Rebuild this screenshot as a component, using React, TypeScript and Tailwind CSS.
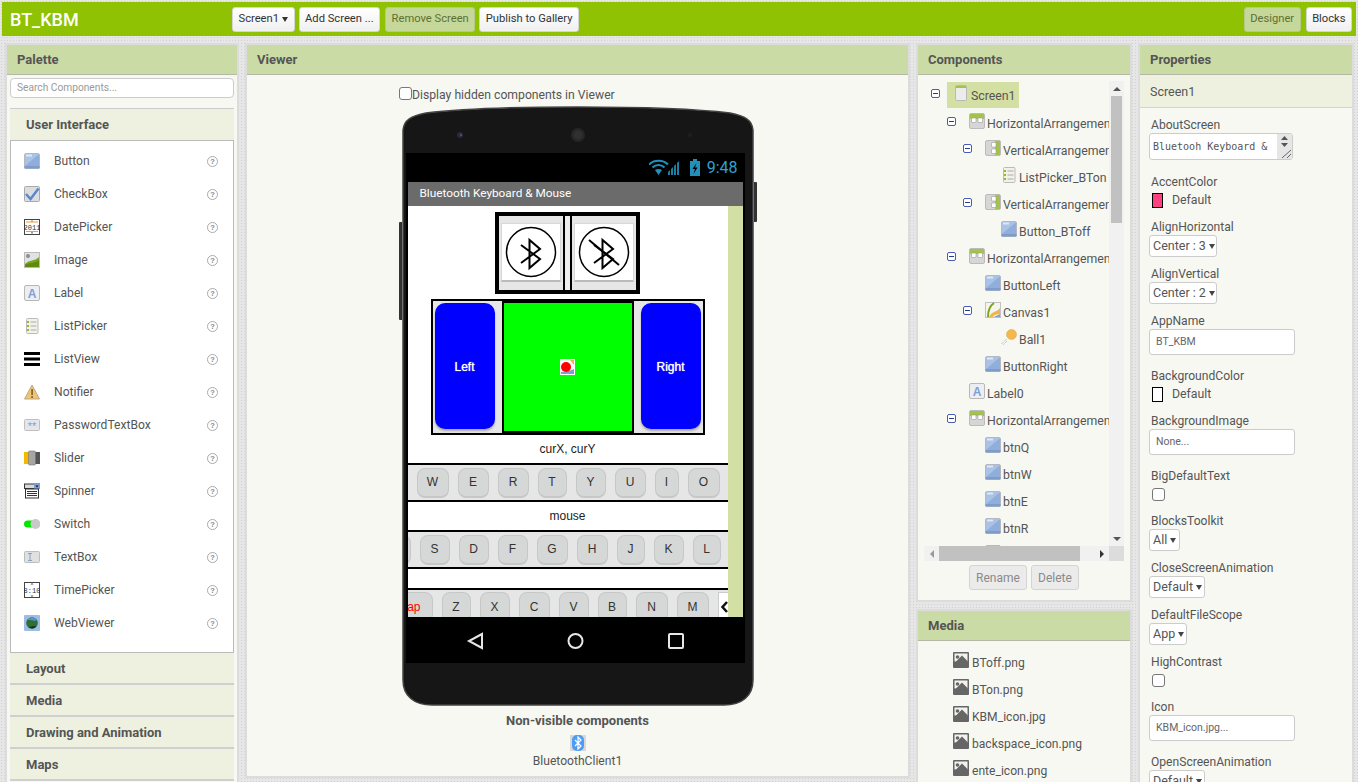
import type { ReactNode } from "react";

const RB = "font-['Roboto',sans-serif]";
const AR = "font-['Liberation_Sans',Arial,sans-serif]";

function BtnIcon() {
  return (
    <svg width="16" height="16" viewBox="0 0 16 16">
      <rect x="0.5" y="0.5" width="15" height="15" rx="1.5" fill="#a9c2e6" stroke="#b5b8bf" />
      <path d="M1 13 L14 2 L15 2 L15 13 Z" fill="#8faedb" />
      <rect x="2" y="1.5" width="6" height="2" fill="#dde7f6" />
      <rect x="0.5" y="13" width="15" height="2.5" fill="#7f9cc9" />
    </svg>
  );
}

function CheckIcon() {
  return (
    <svg width="16" height="16" viewBox="0 0 16 16">
      <rect x="0.5" y="0.5" width="15" height="15" rx="1" fill="#dcdde0" stroke="#aaa" />
      <path d="M2 8 L6.5 13 L14.5 2.5" fill="none" stroke="#5a86cc" strokeWidth="2.4" />
    </svg>
  );
}

function DateIcon() {
  return (
    <svg width="16" height="16" viewBox="0 0 16 16">
      <rect x="0.5" y="0.5" width="15" height="15" fill="#fff" stroke="#444" />
      <path d="M2 3 H14 M2 12.5 H14" stroke="#e9a13b" />
      <path d="M8 1.5 L8 2.5 M8 13 L8 14.5" stroke="#333" />
      <text x="8" y="11" textAnchor="middle" fontSize="7" fontFamily="Liberation Mono" fill="#333">2011</text>
    </svg>
  );
}

function ImageIcon() {
  return (
    <svg width="16" height="16" viewBox="0 0 16 16">
      <rect x="0.5" y="0.5" width="15" height="15" fill="#dfe3e6" stroke="#bbb" />
      <circle cx="4" cy="4" r="2" fill="#8a8f96" />
      <path d="M1 12 C6 7 10 10 15 5 V15 H1 Z" fill="#7da41d" />
      <path d="M1 13 C6 10 10 12 15 8 V15 H1 Z" fill="#5f8a10" />
    </svg>
  );
}

function LabelIcon() {
  return (
    <svg width="16" height="16" viewBox="0 0 16 16">
      <rect x="0.5" y="0.5" width="15" height="15" rx="1.5" fill="#eceef2" stroke="#b8b8b8" />
      <text x="8" y="12.5" textAnchor="middle" fontSize="12" fontWeight="700" fontFamily="Liberation Sans" fill="#7f9fd6">A</text>
    </svg>
  );
}

function ListPickerIcon() {
  return (
    <svg width="16" height="16" viewBox="0 0 16 16">
      <rect x="2.5" y="0.5" width="11.5" height="15" rx="1" fill="#f2f2ea" stroke="#bbb" />
      <path d="M6.5 4 H12.5 M6.5 8 H12.5 M6.5 12 H12.5" stroke="#aaa" />
      <path d="M4 3 V5 M4 7 V9 M4 11 V13" stroke="#94ba2c" strokeWidth="2" />
    </svg>
  );
}

function ListViewIcon() {
  return (
    <svg width="16" height="16" viewBox="0 0 16 16">
      <rect x="0" y="1" width="16" height="3" fill="#000" />
      <rect x="0" y="6.5" width="16" height="3" fill="#000" />
      <rect x="0" y="12" width="16" height="3" fill="#000" />
    </svg>
  );
}

function NotifierIcon() {
  return (
    <svg width="16" height="16" viewBox="0 0 16 16">
      <path d="M8 1 L15.5 15 H0.5 Z" fill="#f1c470" stroke="#b9a98b" />
      <rect x="7.2" y="5" width="1.8" height="6" fill="#8c6a33" />
      <rect x="7.2" y="12" width="1.8" height="2" fill="#8c6a33" />
    </svg>
  );
}

function PasswordIcon() {
  return (
    <svg width="16" height="16" viewBox="0 0 16 16">
      <rect x="0.5" y="2.5" width="15" height="11" rx="1" fill="#e4e6ea" stroke="#c0c0c0" />
      <text x="8" y="13" textAnchor="middle" fontSize="11" fontFamily="Liberation Sans" fill="#7f9fd6">**</text>
    </svg>
  );
}

function SliderIcon() {
  return (
    <svg width="16" height="16" viewBox="0 0 16 16">
      <rect x="0" y="2" width="6" height="12" fill="#f5b800" />
      <rect x="10" y="2" width="6" height="12" fill="#555" />
      <rect x="4.5" y="1" width="7" height="14" rx="1" fill="#a6a6a6" stroke="#777" strokeWidth="0.6" />
    </svg>
  );
}

function SpinnerIcon() {
  return (
    <svg width="16" height="16" viewBox="0 0 16 16">
      <rect x="0.5" y="1" width="15" height="4.5" fill="#d9d9d9" stroke="#333" />
      <rect x="10" y="1" width="6" height="5" fill="#7d9fd8" />
      <path d="M11.5 2.5 H14.5 L13 4.5 Z" fill="#111" />
      <rect x="1.5" y="6" width="13" height="9" fill="#fff" stroke="#333" />
      <path d="M3 8.5 H13 M3 10.5 H13 M3 12.5 H13" stroke="#333" />
    </svg>
  );
}

function SwitchIcon() {
  return (
    <svg width="16" height="16" viewBox="0 0 16 16">
      <rect x="0" y="4.5" width="12" height="7" rx="3.5" fill="#00e600" />
      <circle cx="11.5" cy="8" r="5" fill="#c9c9c9" />
    </svg>
  );
}

function TextBoxIcon() {
  return (
    <svg width="16" height="16" viewBox="0 0 16 16">
      <rect x="0.5" y="2.5" width="15" height="11" rx="1" fill="#dfe0e2" stroke="#bdbdbd" />
      <path d="M4 4.5 H8 M4 11.5 H8 M6 4.5 V11.5" stroke="#8c9fc2" />
    </svg>
  );
}

function TimeIcon() {
  return (
    <svg width="16" height="16" viewBox="0 0 16 16">
      <rect x="0.5" y="0.5" width="15" height="15" fill="#fff" stroke="#444" />
      <path d="M6.5 2.5 H9.5 L8 1 Z M6.5 13.5 H9.5 L8 15 Z" fill="#555" />
      <text x="8" y="10.8" textAnchor="middle" fontSize="7" fontFamily="Liberation Mono" fill="#333">8:10</text>
    </svg>
  );
}

function WebIcon() {
  return (
    <svg width="16" height="16" viewBox="0 0 16 16">
      <rect x="0" y="0" width="16" height="16" rx="1" fill="#9dbce6" />
      <circle cx="8" cy="8" r="5.8" fill="#2f6f35" />
      <path d="M3 5 C6 2 11 2 13 5 C10 7 6 4 3 5 Z" fill="#5d8fd0" />
      <path d="M4 12 C7 14 10 14 12.5 11.5 C9 10 7 12 4 12 Z" fill="#16361f" />
    </svg>
  );
}

function HArrIcon() {
  return (
    <svg width="16" height="16" viewBox="0 0 16 16">
      <rect x="0.5" y="0.5" width="15" height="15" rx="1.5" fill="#d6d6d6" stroke="#bbb" />
      <rect x="1" y="1" width="14" height="5" fill="#a5c34a" />
      <rect x="2.5" y="5" width="4.5" height="4.5" rx="0.5" fill="#fff" stroke="#999" strokeWidth="0.6" />
      <rect x="9" y="5" width="4.5" height="4.5" rx="0.5" fill="#fff" stroke="#999" strokeWidth="0.6" />
    </svg>
  );
}

function VArrIcon() {
  return (
    <svg width="16" height="16" viewBox="0 0 16 16">
      <rect x="0.5" y="0.5" width="15" height="15" rx="1.5" fill="#d6d6d6" stroke="#bbb" />
      <rect x="10" y="1" width="5" height="14" fill="#a5c34a" />
      <rect x="6.5" y="2.5" width="4.5" height="4.5" rx="0.5" fill="#fff" stroke="#999" strokeWidth="0.6" />
      <rect x="6.5" y="9" width="4.5" height="4.5" rx="0.5" fill="#fff" stroke="#999" strokeWidth="0.6" />
    </svg>
  );
}

function CanvasIcon() {
  return (
    <svg width="16" height="16" viewBox="0 0 16 16">
      <rect x="0.5" y="0.5" width="15" height="15" fill="#f5f5ef" stroke="#c2c2c2" />
      <path d="M3 15 C3 6 6 3 9 1" fill="none" stroke="#7da41d" strokeWidth="2" />
      <path d="M4 15 C8 8 11 11 15 6 V12 C12 13 9 12 8 15 Z" fill="#f0b54a" />
      <path d="M9 15 C11 13 13 14 15 12 V15 Z" fill="#7d9fd8" />
    </svg>
  );
}

function BallIcon() {
  return (
    <svg width="16" height="16" viewBox="0 0 16 16">
      <circle cx="10.5" cy="5.5" r="5" fill="#f3b94c" stroke="#d4a04a" strokeWidth="0.5" />
      <path d="M0.5 15 L6 9.5 M2.5 15.5 L6 12" stroke="#aaa" strokeDasharray="1 1" />
    </svg>
  );
}

function ScreenIcon() {
  return (
    <svg width="12" height="16" viewBox="0 0 12 16">
      <rect x="0.5" y="0.5" width="11" height="15" rx="1" fill="#ececec" stroke="#b9b9b9" />
      <rect x="1" y="1" width="10" height="2" fill="#a5c34a" />
    </svg>
  );
}

function MediaIcon() {
  return (
    <svg width="16" height="16" viewBox="0 0 16 16">
      <rect x="0" y="0" width="16" height="16" rx="1" fill="#666" />
      <rect x="1.5" y="1.5" width="13" height="8" fill="#f2f2ee" />
      <circle cx="4.5" cy="5" r="1.8" fill="#666" />
      <path d="M1.5 11 L9 3.5 L14.5 9 V14 H1.5 Z" fill="#666" />
    </svg>
  );
}

function HelpIcon() {
  return (
    <svg width="11" height="11" viewBox="0 0 11 11">
      <circle cx="5.5" cy="5.5" r="5" fill="#fff" stroke="#aaa" />
      <text x="5.5" y="8.2" textAnchor="middle" fontSize="7.5" fontWeight="700" fontFamily="Liberation Sans" fill="#888">?</text>
    </svg>
  );
}

function TopBtn({ children, active }: { children: ReactNode; active?: boolean }) {
  return (
    <div
      className={
        active
          ? "flex h-[25px] items-center rounded-[3px] border border-[#b5c98a] bg-[#c5d89a] px-[5.5px] text-[11.2px] text-[#5e7032]"
          : "flex h-[25px] items-center rounded-[3px] border border-[#d5d5d5] bg-gradient-to-b from-white to-[#f0f0f0] px-[5.5px] text-[11.2px] text-[#333]"
      }
    >
      {children}
    </div>
  );
}

const palette: [string, ReactNode][] = [
  ["Button", <BtnIcon />],
  ["CheckBox", <CheckIcon />],
  ["DatePicker", <DateIcon />],
  ["Image", <ImageIcon />],
  ["Label", <LabelIcon />],
  ["ListPicker", <ListPickerIcon />],
  ["ListView", <ListViewIcon />],
  ["Notifier", <NotifierIcon />],
  ["PasswordTextBox", <PasswordIcon />],
  ["Slider", <SliderIcon />],
  ["Spinner", <SpinnerIcon />],
  ["Switch", <SwitchIcon />],
  ["TextBox", <TextBoxIcon />],
  ["TimePicker", <TimeIcon />],
  ["WebViewer", <WebIcon />],
];

function PanelHead({ title }: { title: string }) {
  return (
    <div className="flex h-[30px] items-center border-b border-[#b4b8a6] bg-[#cbdba6] pl-[10px] text-[13px] font-bold text-[#555]">
      {title}
    </div>
  );
}

function Palette() {
  return (
    <div className="h-[760px] w-[234px] shrink-0 border-2 border-[#dcdcdc] bg-[#f7f8f2]">
      <PanelHead title="Palette" />
      <div className="px-[3px]">
        <div className="mt-[3px] flex h-[20px] items-center rounded-[4px] border border-[#ccc] bg-white pl-[6px] text-[10.2px] text-[#999]">
          Search Components...
        </div>
        <div className="mt-[10px] flex h-[32px] items-center border-t border-[#ccc] bg-[#eef1df] pl-[16px] text-[13px] font-bold text-[#555]">
          User Interface
        </div>
        <div className="h-[513px] border border-[#bbb] bg-white pt-[3px]">
          {palette.map(([name, icon]) => (
            <div key={name} className="flex h-[33px] items-center pl-[13px] text-[12.1px] text-[#555]">
              <span className="mt-[1px] flex h-[16px] w-[16px]">{icon}</span>
              <span className="ml-[14px] w-[153px] pt-[1px]">{name}</span>
              <span className="mt-[1px] flex">
                <HelpIcon />
              </span>
            </div>
          ))}
        </div>
        {["Layout", "Media", "Drawing and Animation", "Maps"].map((s) => (
          <div
            key={s}
            className="flex h-[32px] items-center border-b-2 border-[#cfcfcf] bg-[#eef1df] pl-[16px] pt-[1px] text-[13px] font-bold text-[#555]"
          >
            {s}
          </div>
        ))}
      </div>
    </div>
  );
}

function BtGlyph({ off }: { off?: boolean }) {
  return (
    <svg width="58" height="57" viewBox="0 0 58 57">
      <circle cx="29" cy="28" r="24.5" fill="#fff" stroke="#000" strokeWidth="1.5" />
      <path d="M19 21 L38 35 L27.5 44 V16 L38 25 L19 39" fill="none" stroke="#000" strokeWidth="2" />
      {off && <path d="M14 16 L44 41" stroke="#000" strokeWidth="2" />}
    </svg>
  );
}

function BtCell({ off }: { off?: boolean }) {
  return (
    <div className="h-[74px] w-[64px] bg-[#e6e6e6] pl-[2px] pt-[7px]">
      <div className="h-[59px] w-[60px] border border-b-2 border-[#d8d8d8] border-b-[#bbb] bg-white">
        <BtGlyph off={off} />
      </div>
    </div>
  );
}

function Key({ label, w }: { label: string; w: string }) {
  return (
    <div
      className={`flex h-[30px] shrink-0 items-center justify-center rounded-[8px] border border-b-2 border-[#c6c8c8] bg-[#d6d8d8] text-[12px] text-[#333] ${w}`}
    >
      {label}
    </div>
  );
}

const rowOne: [string, string][] = [
  ["W", "w-[32px]"],
  ["E", "w-[31px]"],
  ["R", "w-[31px]"],
  ["T", "w-[29px]"],
  ["Y", "w-[30px]"],
  ["U", "w-[31px]"],
  ["I", "w-[24px]"],
  ["O", "w-[32px]"],
];
const rowTwo: [string, string][] = [
  ["", "w-[30px]"],
  ["S", "w-[30px]"],
  ["D", "w-[30px]"],
  ["F", "w-[30px]"],
  ["G", "w-[31px]"],
  ["H", "w-[31px]"],
  ["J", "w-[28px]"],
  ["K", "w-[30px]"],
  ["L", "w-[28px]"],
];
const rowThree: [string, string][] = [
  ["Z", "w-[29px]"],
  ["X", "w-[30px]"],
  ["C", "w-[31px]"],
  ["V", "w-[30px]"],
  ["B", "w-[29px]"],
  ["N", "w-[32px]"],
  ["M", "w-[32px]"],
];

function PhoneContent() {
  return (
    <div className={`h-[411px] w-[320px] overflow-hidden bg-white ${AR}`}>
      <div className="mx-auto mt-[6px] flex h-[82px] w-[145px] border-4 border-black bg-black">
        <BtCell />
        <div className="mx-[2px] w-[5px] bg-[#eeeeee]" />
        <BtCell off />
      </div>
      <div className="mx-auto mt-[5px] flex h-[136px] w-[274px] border-2 border-black bg-[#e6e6e6]">
        <div className="w-[69px] pl-[2px] pt-[2px]">
          <div className="flex h-[126px] w-[60px] items-center justify-center rounded-[10px] bg-[#0000ff] pt-[2px] text-[12px] text-white shadow-[0_2px_2px_#aaa] [text-shadow:0_0_1px_#fff]">
            Left
          </div>
        </div>
        <div className="flex h-[132px] w-[132px] items-center justify-center border-2 border-black bg-[#00ff00]">
          <svg width="15" height="16" viewBox="0 0 15 16">
            <rect width="15" height="16" fill="#fff" />
            <path d="M10 1 H14 V6 Z" fill="#f0b54a" />
            <path d="M1 15 L14 15 L14 10 C10 12 6 12 1 13 Z" fill="#7d9fd8" />
            <circle cx="6" cy="8" r="5" fill="#f00" />
          </svg>
        </div>
        <div className="w-[69px] pl-[7px] pt-[2px]">
          <div className="flex h-[126px] w-[60px] items-center justify-center rounded-[10px] bg-[#0000ff] pt-[2px] text-[12px] text-white shadow-[0_2px_2px_#aaa] [text-shadow:0_0_1px_#fff]">
            Right
          </div>
        </div>
      </div>
      <div className="flex h-[28px] items-center justify-center text-[12px] text-[#222]">curX, curY</div>
      <div className="flex h-[39px] items-center gap-[9px] border-y-2 border-black bg-[#e6e6e6] pl-[9px]">
        {rowOne.map(([k, w]) => (
          <Key key={k} label={k} w={w} />
        ))}
      </div>
      <div className="flex h-[28px] items-center justify-center text-[12px] text-[#222]">mouse</div>
      <div className="flex h-[39px] items-center border-y-2 border-black bg-[#e6e6e6]">
        <div className="-ml-[27px] flex gap-[9px]">
          {rowTwo.map(([k, w]) => (
            <Key key={k || "a"} label={k} w={w} />
          ))}
        </div>
      </div>
      <div className="h-[19px]" />
      <div className="flex h-[40px] items-start gap-[9px] overflow-hidden border-t-2 border-black bg-[#e6e6e6] pt-[2px]">
        <div className="-ml-[22px] flex h-[30px] w-[47px] shrink-0 items-center justify-end rounded-[8px] border border-b-2 border-[#c6c8c8] bg-[#d6d8d8] pr-[11px] text-[12px] text-[#f00]">
          Cap
        </div>
        {rowThree.map(([k, w]) => (
          <Key key={k} label={k} w={w} />
        ))}
        <div className="flex h-[30px] w-[24px] shrink-0 items-center border border-[#ccc] bg-white pl-[2px]">
          <svg width="10" height="14" viewBox="0 0 10 14">
            <path d="M6 2 L1.5 7 L6 12" fill="none" stroke="#111" strokeWidth="2.5" />
          </svg>
        </div>
      </div>
    </div>
  );
}

function Phone() {
  return (
    <div className="relative mx-auto mt-[3px] h-[600px] w-[352px]">
      <svg className="absolute inset-0" width="352" height="600" viewBox="0 0 352 600">
        <path
          d="M1 24 C2 14 9 10 24 7 C90 -1 262 -1 328 7 C343 10 350 14 351 24 L351 574 C351 590 340 599 322 599 L30 599 C12 599 1 590 1 574 Z"
          fill="#161616"
          stroke="#444"
          strokeWidth="1.5"
        />
        <circle cx="58" cy="29" r="3" fill="#2a2a3a" />
        <circle cx="59" cy="29" r="1" fill="#55558a" />
        <circle cx="176" cy="29" r="7" fill="#262626" />
        <circle cx="176" cy="29" r="4.5" fill="#303030" />
        <circle cx="288" cy="29" r="2.5" fill="#1d1d1d" />
      </svg>
      <div className="absolute left-[-3px] top-[116px] h-[98px] w-[3px] rounded-l-[1px] bg-[#333]" />
      <div className="absolute right-[-3px] top-[76px] h-[40px] w-[3px] rounded-r-[1px] bg-[#333]" />
      <div className="relative pl-[4px] pt-[47px]">
        <div className="h-[510px] w-[339px] bg-black">
          <div className="flex h-[29px] items-center justify-end pr-[7px]">
            <svg width="33" height="17" viewBox="0 0 33 17">
              <path d="M0 5.5 C5 0.5 14 0.5 19 5.5" fill="none" stroke="#2390bb" strokeWidth="2" />
              <path d="M3.5 8.5 C7 5 12 5 15.5 8.5" fill="none" stroke="#2390bb" strokeWidth="2" />
              <path d="M6 11 C8 9.5 11 9.5 13 11 L9.5 16 Z" fill="#2390bb" />
              <path d="M19 16 V13 L21 11 V16 Z M22 16 V10 L24 8 V16 Z M25 16 V7 L27 5 V16 Z M28 16 V4 L30 2 V16 Z" fill="#1d7ea6" />
            </svg>
            <svg className="ml-[8px]" width="10" height="17" viewBox="0 0 10 17">
              <rect x="3" y="0" width="4" height="2" fill="#2390bb" />
              <rect x="0" y="2" width="10" height="15" fill="#2390bb" />
              <path d="M6.5 4 L2.5 10 H5 L3.5 15 L7.5 8.5 H5 Z" fill="#000" />
            </svg>
            <span className={`ml-[7px] text-[16px] text-[#2ba3d4] ${RB}`}>9:48</span>
          </div>
          <div className="ml-[2px] flex h-[24px] w-[335px] items-center bg-[#6b6b6b] pl-[12px] text-[11.8px] text-white">
            Bluetooth Keyboard &amp; Mouse
          </div>
          <div className="ml-[2px] flex w-[335px]">
            <PhoneContent />
            <div className="w-[15px] bg-[#d3dfa3]" />
          </div>
          <div className="flex h-[46px] items-center">
            <svg width="339" height="46" viewBox="0 0 339 46">
              <path d="M76 17 L63 24 L76 31 Z" fill="none" stroke="#e6e6e6" strokeWidth="2" />
              <circle cx="169.5" cy="24" r="7" fill="none" stroke="#e6e6e6" strokeWidth="2" />
              <rect x="263" y="17" width="14" height="14" rx="1" fill="none" stroke="#e6e6e6" strokeWidth="2" />
            </svg>
          </div>
        </div>
      </div>
    </div>
  );
}

function Viewer() {
  return (
    <div className="h-[735px] w-[665px] shrink-0 border-2 border-[#dcdcdc] bg-[#f7f8f2]">
      <PanelHead title="Viewer" />
      <div className="flex h-[28px] items-end pl-[152px] text-[12.2px] text-[#555]">
        <span className="mb-[3px] h-[13px] w-[13px] rounded-[3px] border border-[#777] bg-white" />
        <span className="leading-[15px]">Display hidden components in Viewer</span>
      </div>
      <Phone />
      <div className="mt-[5px] text-center text-[13px] font-bold text-[#555]">Non-visible components</div>
      <div className="mt-[4px] flex justify-center">
        <svg width="16" height="16" viewBox="0 0 16 16">
          <rect width="16" height="16" fill="#d8d8d8" />
          <rect x="2" y="0" width="12" height="16" rx="5" fill="#4d9bf5" />
          <path d="M5 5 L11 11 L8 14 V2 L11 5 L5 11" fill="none" stroke="#fff" strokeWidth="1.2" />
        </svg>
      </div>
      <div className="mt-[1px] text-center text-[12.1px] text-[#555]">BluetoothClient1</div>
    </div>
  );
}

type TreeItem = { name: string; icon: ReactNode; pl: string; toggle?: boolean };

const tree: TreeItem[] = [
  { name: "HorizontalArrangement1", icon: <HArrIcon />, pl: "pl-[23px]", toggle: true },
  { name: "VerticalArrangement1", icon: <VArrIcon />, pl: "pl-[39px]", toggle: true },
  { name: "ListPicker_BTon", icon: <ListPickerIcon />, pl: "pl-[55px]" },
  { name: "VerticalArrangement2", icon: <VArrIcon />, pl: "pl-[39px]", toggle: true },
  { name: "Button_BToff", icon: <BtnIcon />, pl: "pl-[55px]" },
  { name: "HorizontalArrangement2", icon: <HArrIcon />, pl: "pl-[23px]", toggle: true },
  { name: "ButtonLeft", icon: <BtnIcon />, pl: "pl-[39px]" },
  { name: "Canvas1", icon: <CanvasIcon />, pl: "pl-[39px]", toggle: true },
  { name: "Ball1", icon: <BallIcon />, pl: "pl-[55px]" },
  { name: "ButtonRight", icon: <BtnIcon />, pl: "pl-[39px]" },
  { name: "Label0", icon: <LabelIcon />, pl: "pl-[23px]" },
  { name: "HorizontalArrangement3", icon: <HArrIcon />, pl: "pl-[23px]", toggle: true },
  { name: "btnQ", icon: <BtnIcon />, pl: "pl-[39px]" },
  { name: "btnW", icon: <BtnIcon />, pl: "pl-[39px]" },
  { name: "btnE", icon: <BtnIcon />, pl: "pl-[39px]" },
  { name: "btnR", icon: <BtnIcon />, pl: "pl-[39px]" },
  { name: "btnT", icon: <BtnIcon />, pl: "pl-[39px]" },
];

function Toggle() {
  return (
    <span className="mt-[7px] flex h-[9px] w-[9px] shrink-0 items-center justify-center rounded-[2px] border border-[#4a5cb0] bg-white">
      <span className="h-[1px] w-[5px] bg-[#2a3a90]" />
    </span>
  );
}

function Components() {
  return (
    <div className="h-[559px] w-[216px] border-2 border-[#dcdcdc] bg-[#f7f8f2]">
      <PanelHead title="Components" />
      <div className="ml-[6px] mt-[6px] w-[200px]">
        <div className="flex h-[465px]">
          <div className="h-[465px] w-[185px] overflow-hidden whitespace-nowrap pt-[1px] text-[12.3px] text-[#555]">
            <div className="flex h-[28px] items-start pl-[7px]">
              <Toggle />
              <div className="ml-[7px] flex h-[26px] w-[72px] bg-[#d3dfa3] pl-[8px]">
                <span className="mt-[3px] h-[16px] w-[12px]">
                  <ScreenIcon />
                </span>
                <span className="ml-[4px] mt-[6px] leading-[16px]">Screen1</span>
              </div>
            </div>
            {tree.map((t) => (
              <div key={t.name} className={`flex h-[27px] items-start ${t.pl}`}>
                <span className="w-[9px] shrink-0">{t.toggle && <Toggle />}</span>
                <span className="ml-[13px] mt-[3px] h-[16px] w-[16px] shrink-0">{t.icon}</span>
                <span className="ml-[2px] mt-[6px] leading-[16px]">{t.name}</span>
              </div>
            ))}
          </div>
          <div className="w-[15px] bg-[#f1f1f1]">
            <div className="flex h-[15px] items-center justify-center">
              <div className="border-x-[4px] border-b-[4px] border-x-transparent border-b-[#555]" />
            </div>
            <div className="ml-[2px] h-[127px] w-[11px] bg-[#c1c1c1]" />
            <div className="mt-[308px] flex h-[15px] items-center justify-center">
              <div className="border-x-[4px] border-t-[4px] border-x-transparent border-t-[#555]" />
            </div>
          </div>
        </div>
        <div className="flex h-[15px] bg-[#f1f1f1]">
          <div className="flex w-[15px] items-center justify-center">
            <div className="border-y-[4px] border-r-[4px] border-y-transparent border-r-[#999]" />
          </div>
          <div className="w-[141px] bg-[#c1c1c1]" />
          <div className="flex w-[29px] items-center justify-end pr-[5px]">
            <div className="border-y-[4px] border-l-[4px] border-y-transparent border-l-[#333]" />
          </div>
          <div className="w-[15px] bg-[#dcdcdc]" />
        </div>
        <div className="mt-[4px] flex gap-[4px] pl-[45px] text-[12px] text-[#8a8a8a]">
          <div className="flex h-[25px] w-[58px] items-center justify-center rounded-[3px] border border-[#d4d4d4] bg-[#ebebeb]">
            Rename
          </div>
          <div className="flex h-[25px] w-[48px] items-center justify-center rounded-[3px] border border-[#d4d4d4] bg-[#ebebeb]">
            Delete
          </div>
        </div>
      </div>
    </div>
  );
}

function Media() {
  return (
    <div className="mt-[7px] h-[200px] w-[216px] border-2 border-[#dcdcdc] bg-[#f7f8f2]">
      <PanelHead title="Media" />
      <div className="pl-[35px] pt-[8px] text-[12.1px] text-[#555]">
        {["BToff.png", "BTon.png", "KBM_icon.jpg", "backspace_icon.png", "ente_icon.png"].map((m) => (
          <div key={m} className="flex h-[27px] items-start">
            <span className="mt-[3px] h-[16px] w-[16px]">
              <MediaIcon />
            </span>
            <span className="ml-[3px] mt-[6px] leading-[16px]">{m}</span>
          </div>
        ))}
      </div>
    </div>
  );
}

function PropLabel({ text, mt }: { text: string; mt: string }) {
  return <div className={`h-[16px] pl-[11px] pt-[1px] text-[12.1px] leading-[16px] text-[#555] ${mt}`}>{text}</div>;
}

function PropSelect({ text, w, h = "h-[22px]" }: { text: string; w: string; h?: string }) {
  return (
    <div className={`ml-[9px] mt-[1px] flex items-center rounded-[3px] border border-[#ccc] bg-white pl-[3px] text-[12.5px] text-[#555] ${w} ${h}`}>
      <span>{text}</span>
      <svg className="ml-[3px]" width="6" height="6" viewBox="0 0 6 6">
        <path d="M0 1 H6 L3 6 Z" fill="#444" />
      </svg>
    </div>
  );
}

function PropInput({ text }: { text: string }) {
  return (
    <div className="ml-[9px] mt-[1px] flex h-[26px] w-[146px] items-center rounded-[3px] border border-[#ccc] bg-white pl-[6px] text-[10.5px] text-[#666]">
      {text}
    </div>
  );
}

function PropColor({ color, text }: { color: string; text: string }) {
  return (
    <div className="ml-[12px] mt-[4px] flex h-[15px] items-center text-[12.3px] text-[#555]">
      <span className={`h-[15px] w-[11px] border border-black ${color}`} />
      <span className="ml-[9px]">{text}</span>
    </div>
  );
}

function PropCheck() {
  return <div className="ml-[12px] mt-[5px] h-[13px] w-[13px] rounded-[3px] border border-[#777] bg-white" />;
}

function Properties() {
  return (
    <div className="h-[760px] w-[216px] border-2 border-[#dcdcdc] bg-[#f7f8f2]">
      <PanelHead title="Properties" />
      <div className="flex h-[33px] items-center border-b border-[#d4d4d4] bg-[#eef1df] pl-[10px] pt-[2px] text-[12.5px] text-[#555]">
        Screen1
      </div>
      <PropLabel text="AboutScreen" mt="mt-[8px]" />
      <div className="ml-[9px] mt-[1px] flex h-[27px] w-[144px] rounded-[3px] border border-[#ccc] bg-white">
        <span className="ml-[3px] mt-[5px] font-['DejaVu_Sans_Mono',monospace] text-[10px] leading-[15px] text-[#555]">
          Bluetooh Keyboard &amp;
        </span>
        <svg className="ml-auto" width="15" height="25" viewBox="0 0 15 25">
          <rect width="15" height="25" fill="#e6e6e6" />
          <path d="M4 6 L7.5 2 L11 6 Z M4 9 L11 9 L7.5 13 Z" fill="#555" />
          <path d="M5 24 L14 16 M10 24 L14 20" stroke="#666" />
        </svg>
      </div>
      <PropLabel text="AccentColor" mt="mt-[13px]" />
      <PropColor color="bg-[#ff4081]" text="Default" />
      <PropLabel text="AlignHorizontal" mt="mt-[10px]" />
      <PropSelect text="Center : 3" w="w-[68px]" />
      <PropLabel text="AlignVertical" mt="mt-[8px]" />
      <PropSelect text="Center : 2" w="w-[68px]" />
      <PropLabel text="AppName" mt="mt-[8px]" />
      <PropInput text="BT_KBM" />
      <PropLabel text="BackgroundColor" mt="mt-[12px]" />
      <PropColor color="bg-white" text="Default" />
      <PropLabel text="BackgroundImage" mt="mt-[10px]" />
      <PropInput text="None..." />
      <PropLabel text="BigDefaultText" mt="mt-[12px]" />
      <PropCheck />
      <PropLabel text="BlocksToolkit" mt="mt-[11px]" />
      <PropSelect text="All" w="w-[31px]" />
      <PropLabel text="CloseScreenAnimation" mt="mt-[8px]" />
      <PropSelect text="Default" w="w-[56px]" />
      <PropLabel text="DefaultFileScope" mt="mt-[8px]" />
      <PropSelect text="App" w="w-[38px]" />
      <PropLabel text="HighContrast" mt="mt-[8px]" />
      <PropCheck />
      <PropLabel text="Icon" mt="mt-[11px]" />
      <PropInput text="KBM_icon.jpg..." />
      <PropLabel text="OpenScreenAnimation" mt="mt-[12px]" />
      <PropSelect text="Default" w="w-[56px]" />
    </div>
  );
}

export default function App() {
  return (
    <div
      className={`h-[782px] w-[1358px] overflow-hidden bg-[#e6e6e6] bg-[radial-gradient(#d2d2d2_1px,transparent_1px)] bg-[length:3px_3px] pt-[2px] ${RB}`}
    >
      <div className="mx-[2px] flex h-[34px] items-center bg-[#8fc202] pl-[8px] pr-[4px]">
        <div className="w-[222px] text-[18px] font-medium text-white">BT_KBM</div>
        <div className="flex gap-[4px]">
          <TopBtn>
            Screen1
            <svg className="ml-[3px]" width="6" height="6" viewBox="0 0 6 6">
              <path d="M0 1 H6 L3 6 Z" fill="#333" />
            </svg>
          </TopBtn>
          <TopBtn>Add Screen ...</TopBtn>
          <div className="ml-[1px] flex gap-[4px]">
            <TopBtn active>Remove Screen</TopBtn>
            <TopBtn>Publish to Gallery</TopBtn>
          </div>
        </div>
        <div className="ml-auto flex gap-[5px]">
          <TopBtn active>Designer</TopBtn>
          <TopBtn>Blocks</TopBtn>
        </div>
      </div>
      <div className="mt-[7px] flex gap-[6px] pl-[5px]">
        <Palette />
        <Viewer />
        <div className="w-[216px] shrink-0">
          <Components />
          <Media />
        </div>
        <Properties />
      </div>
    </div>
  );
}
